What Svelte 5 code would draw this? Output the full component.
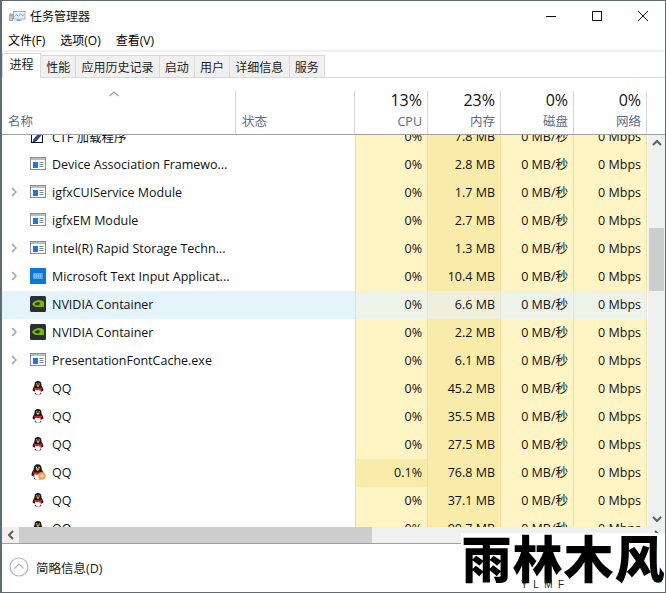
<script>
  const menus = ['文件(F)', '选项(O)', '查看(V)'];
  const tabs = ['进程', '性能', '应用历史记录', '启动', '用户', '详细信息', '服务'];

  const totals = [
    { pct: '13%', label: 'CPU' },
    { pct: '23%', label: '内存' },
    { pct: '0%', label: '磁盘' },
    { pct: '0%', label: '网络' }
  ];

  const rows = [
    { name: 'CTF 加载程序', icon: 'ctf', mem: '7.8 MB' },
    { name: 'Device Association Framewo...', icon: 'win', mem: '2.8 MB' },
    { name: 'igfxCUIService Module', icon: 'win', mem: '1.7 MB', more: true },
    { name: 'igfxEM Module', icon: 'win', mem: '2.7 MB' },
    { name: 'Intel(R) Rapid Storage Techn...', icon: 'win', mem: '1.3 MB', more: true },
    { name: 'Microsoft Text Input Applicat...', icon: 'kbd', mem: '10.4 MB', more: true },
    { name: 'NVIDIA Container', icon: 'nv', mem: '6.6 MB', hover: true },
    { name: 'NVIDIA Container', icon: 'nv', mem: '2.2 MB', more: true },
    { name: 'PresentationFontCache.exe', icon: 'win', mem: '6.1 MB', more: true },
    { name: 'QQ', icon: 'qq', mem: '45.2 MB' },
    { name: 'QQ', icon: 'qq', mem: '35.5 MB' },
    { name: 'QQ', icon: 'qq', mem: '27.5 MB' },
    { name: 'QQ', icon: 'qqbig', cpu: '0.1%', mem: '76.8 MB' },
    { name: 'QQ', icon: 'qq', mem: '37.1 MB' },
    { name: 'QQ', icon: 'qq', mem: '90.7 MB' }
  ];
</script>

{#snippet penguin()}
  <path d="M8 1c-2.300 0-3.500 1.700-3.500 3.900 0 1.100-1 2-1.500 3.400-.6 1.500-.4 3 .3 3 .3 0 .6-.3.8-.7.2.9.6 1.700 1.200 2.200-.7.4-.8 1.200 0 1.400 1 .3 4.400.3 5.400 0 .8-.2.7-1 0-1.400.6-.5 1-1.300 1.200-2.200.2.4.5.7.8.7.7 0 .9-1.500.3-3-.5-1.400-1.500-2.300-1.500-3.400C11.500 2.700 10.300 1 8 1z" fill="#1a1a1a" />
  <path d="M5.200 9.500c-.5 2 0 4.300 1.300 4.800.9.300 2.100.3 3 0 1.300-.5 1.800-2.800 1.300-4.800z" fill="#fff" />
  <path d="M4.200 7.400c2.200 1.100 5.400 1.100 7.600 0l.4 1.500c-.4.300-1 .6-1.600.8l.3 2.300-1.700-2c-1.700.3-3.200.1-4.900-.7z" fill="#e0222a" />
  <path d="M6.500 5c1-.5 2-.5 3 0L8.800 6.500c-.5.300-1.100.3-1.600 0z" fill="#efb320" />
  <path d="M6.300 3.200h1v1.300h-1zM8.700 3.200h1v1.300h-1z" fill="#e8e8e8" />
{/snippet}

<div class="window">
  <header class="titlebar">
    <svg class="app-icon" width="17" height="14" viewBox="0 0 25 16">
      <rect x="1" y="5" width="4" height="10" fill="#c9c9c9" stroke="#8b8b8b" />
      <rect x="2" y="7" width="2" height="1" fill="#4ba34b" />
      <rect x="6.500" y="1.500" width="17" height="11" fill="#e6f1fa" stroke="#7f8c97" />
      <path d="M8 9l3-3 3 2.500 3-4 3 3 2-1" fill="none" stroke="#3d9bd8" />
      <path d="M12 13h5v1.500h2v1h-9v-1h2z" fill="#8d959c" />
    </svg>
    <span class="title">任务管理器</span>
    <div class="controls">
      <svg width="46" height="30" viewBox="0 0 46 30"><path d="M18 15.500h10" stroke="#111" /></svg>
      <svg width="46" height="30" viewBox="0 0 46 30"><rect x="18.500" y="10.500" width="9" height="9" fill="none" stroke="#111" /></svg>
      <svg width="46" height="30" viewBox="0 0 46 30"><path d="M18 10l10 10M28 10l-10 10" stroke="#111" /></svg>
    </div>
  </header>

  <nav class="menubar">
    {#each menus as m}
      <span>{m}</span>
    {/each}
  </nav>

  <div class="tabbar">
    {#each tabs as t, i}
      <span class="tab" class:active={i === 0}>{t}</span>
    {/each}
  </div>

  <div class="table-head">
    <div class="head-cell name-col">
      <svg class="sort" width="12" height="6" viewBox="0 0 12 6"><path d="M1.500 5L6 1l4.500 4" fill="none" stroke="#9a9fa6" stroke-width="1.200" /></svg>
      <span class="head-label">名称</span>
    </div>
    <div class="head-cell status-col"><span class="head-label">状态</span></div>
    {#each totals as t}
      <div class="head-cell num-col">
        <span class="pct">{t.pct}</span>
        <span class="head-label">{t.label}</span>
      </div>
    {/each}
  </div>

  <div class="table-area">
    <div class="rows-view">
      <div class="rows">
        {#each rows as r}
          <div class="row" class:hover={r.hover}>
            <div class="name-col name-cell">
              <span class="chevron">
                {#if r.more}
                  <svg width="7" height="10" viewBox="0 0 7 10"><path d="M1 1l4 4-4 4" fill="none" stroke="#a3a3a3" stroke-width="1.500" /></svg>
                {/if}
              </span>
              <svg class="icon" width="16" height="16" viewBox="0 0 16 16">
                {#if r.icon === 'win'}
                  <rect x="0.500" y="1.500" width="15" height="12" fill="#fff" stroke="#8a8f94" />
                  <rect x="1" y="2" width="14" height="2" fill="#b9bec3" />
                  <rect x="3" y="6" width="5" height="6" fill="#1f78d1" />
                  <path d="M9.500 6.500h4M9.500 8.500h4M9.500 10.500h4" stroke="#7d8b99" />
                {:else if r.icon === 'kbd'}
                  <rect width="16" height="16" fill="#0a78d7" />
                  <rect x="3" y="5" width="10" height="6" rx="1" fill="#5aa5e6" />
                  <path d="M4 7h8M4 9h8" stroke="#b9dcf6" stroke-dasharray="1 1" />
                {:else if r.icon === 'nv'}
                  <rect width="16" height="16" rx="1.500" fill="#2b2f33" />
                  <path d="M2 8c2-3 4.500-4 7-4 2 0 4 .7 5 2v5H6.500c-2 0-3.500-1-4.500-3z" fill="#76b900" />
                  <path d="M4.500 8c1.300-1.700 4-2.300 6-1-1 .2-1.500 1-1 2-2 .7-3.800.2-5-1z" fill="#2b2f33" />
                {:else if r.icon === 'ctf'}
                  <rect x="1.500" y="3.500" width="11" height="11" fill="#fff" stroke="#111" />
                  <path d="M4 11L12 2l2 2-8 9-3 1z" fill="#1d4fb0" stroke="#111" stroke-width="0.600" />
                {:else if r.icon === 'qq'}
                  {@render penguin()}
                {:else}
                  <g transform="translate(-1.500 -1) scale(1.150)">
                    {@render penguin()}
                  </g>
                  <circle cx="12" cy="12" r="3.800" fill="#f7a35c" />
                  <circle cx="12" cy="12" r="1.600" fill="#fcd3ac" />
                {/if}
              </svg>
              <span class="proc">{r.name}</span>
            </div>
            <div class="status-col"></div>
            <div class="num-col cell" class:warm={r.cpu}>{r.cpu ?? '0%'}</div>
            <div class="num-col cell mem">{r.mem}</div>
            <div class="num-col cell">0 MB/秒</div>
            <div class="num-col cell">0 Mbps</div>
          </div>
        {/each}
      </div>
      <div class="vscroll">
        <span class="arrow"><svg width="10" height="6" viewBox="0 0 10 6"><path d="M1 5l4-4 4 4" fill="none" stroke="#606060" stroke-width="2" /></svg></span>
        <div class="vtrack"><div class="vthumb"></div></div>
        <span class="arrow"><svg width="10" height="6" viewBox="0 0 10 6"><path d="M1 1l4 4 4-4" fill="none" stroke="#606060" stroke-width="2" /></svg></span>
      </div>
    </div>
    <div class="hscroll">
      <span class="arrow"><svg width="6" height="10" viewBox="0 0 6 10"><path d="M5 1L1 5l4 4" fill="none" stroke="#606060" stroke-width="2" /></svg></span>
      <div class="hthumb"></div>
      <span class="arrow end"><svg width="6" height="10" viewBox="0 0 6 10"><path d="M1 1l4 4-4 4" fill="none" stroke="#606060" stroke-width="2" /></svg></span>
    </div>
  </div>

  <footer class="footer">
    <svg width="20" height="20" viewBox="0 0 20 20"><circle cx="10" cy="10" r="9" fill="none" stroke="#b4b4b4" stroke-width="1.200" /><path d="M5.500 11.500L10 7l4.500 4.500" fill="none" stroke="#b4b4b4" stroke-width="1.200" /></svg>
    <span>简略信息(D)</span>
  </footer>

  <div class="watermark">
    <span class="wm-cn">雨林木风</span>
    <span class="wm-en">YLMF</span>
  </div>
</div>

<style>
  :global(body) {
    margin: 0;
    background: #fff;
  }

  .window {
    position: relative;
    width: 666px;
    height: 593px;
    box-sizing: border-box;
    border: 1px solid #5f6b73;
    border-width: 1px 1px 1px 2px;
    display: flex;
    flex-direction: column;
    overflow: hidden;
    background: #fff;
    color: #000;
    font-family: "Open Sans", "Noto Sans CJK SC", sans-serif;
    font-size: 12.500px;
  }

  .titlebar {
    height: 29px;
    display: flex;
    align-items: center;
    padding-left: 7px;
    flex: none;
  }

  .app-icon {
    margin-right: 4px;
  }

  .title {
    font-size: 12px;
    color: #111;
  }

  .controls {
    margin-left: auto;
    display: flex;
    margin-right: -1px;
  }

  .menubar {
    height: 20px;
    display: flex;
    align-items: center;
    gap: 15px;
    padding-left: 6px;
    border-bottom: 2px solid #f0f0f0;
    flex: none;
    font-size: 12px;
  }

  .tabbar {
    height: 25px;
    display: flex;
    align-items: flex-end;
    border-bottom: 1px solid #d9d9d9;
    flex: none;
    font-size: 12px;
  }

  .tab {
    height: 22px;
    box-sizing: border-box;
    display: flex;
    align-items: center;
    padding: 0 5.150px;
    background: #f0f0f0;
    border: 1px solid #d9d9d9;
    border-left: none;
    border-bottom: none;
    color: #222;
  }

  .tab.active {
    height: 25px;
    margin-bottom: -1px;
    background: #fff;
    padding: 0 6.500px 3px;
    border-left: 1px solid #d9d9d9;
    border-bottom: 1px solid #fff;
  }

  .table-head {
    height: 57px;
    box-sizing: border-box;
    display: flex;
    flex: none;
    border-bottom: 1px solid #a0a0a0;
    padding-top: 13px;
  }

  .head-cell {
    display: flex;
    flex-direction: column;
    justify-content: flex-end;
    box-sizing: border-box;
    padding-bottom: 3px;
    border-right: 1px solid #d6d6d6;
  }

  .name-col {
    width: 234px;
    flex: none;
    box-sizing: border-box;
  }

  .status-col {
    width: 119px;
    flex: none;
    box-sizing: border-box;
  }

  .num-col {
    width: 73px;
    flex: none;
    box-sizing: border-box;
  }

  .head-cell.name-col,
  .head-cell.status-col {
    padding-left: 6px;
    position: relative;
  }

  .head-cell.num-col {
    text-align: right;
    padding-right: 5px;
  }

  .sort {
    position: absolute;
    top: 0;
    left: 106px;
  }

  .head-label {
    color: #5d6b80;
    font-size: 12.500px;
    line-height: 19px;
  }

  .pct {
    font-size: 16px;
    line-height: 24px;
    color: #111;
  }

  .table-area {
    flex: 1;
    min-height: 0;
    display: flex;
    flex-direction: column;
  }

  .rows-view {
    flex: 1;
    min-height: 0;
    display: flex;
    overflow: hidden;
  }

  .rows {
    margin-top: -12px;
    width: 646px;
    flex: none;
  }

  .row {
    height: 28px;
    display: flex;
    align-items: stretch;
  }

  .name-cell {
    display: flex;
    align-items: center;
    padding-left: 9px;
    padding-bottom: 2px;
  }

  .chevron {
    width: 19px;
    display: flex;
    align-items: center;
    flex: none;
  }

  .icon {
    flex: none;
    margin-right: 6px;
  }

  .proc {
    white-space: nowrap;
    color: #111;
  }

  .cell {
    display: flex;
    align-items: center;
    justify-content: flex-end;
    padding: 0 5px 0 0;
    background: #fff4c4;
    border-right: 1px solid #f1dfa3;
    color: #111;
    white-space: nowrap;
    line-height: 16px;
  }

  .status-col + .cell {
    border-left: 1px solid #f1dfa3;
  }

  .cell.mem,
  .cell.warm {
    background: #f9ecaa;
  }

  .row.hover .name-cell,
  .row.hover .status-col {
    background: #e5f3fb;
  }

  .row.hover .cell {
    background: #eef3ea;
    border-right-color: #e4e6d8;
  }

  .row.hover .cell.mem {
    background: #eef0dc;
  }

  .vscroll {
    width: 17px;
    background: #f0f0f0;
    display: flex;
    flex-direction: column;
    flex: none;
  }

  .vtrack {
    flex: 1;
    padding-top: 77px;
  }

  .vthumb {
    height: 63px;
    margin: 0 1px;
    background: #cdcdcd;
  }

  .arrow {
    flex: none;
    width: 17px;
    height: 16px;
    display: flex;
    align-items: center;
    justify-content: center;
  }

  .arrow.end {
    margin-left: auto;
  }

  .hscroll {
    height: 17px;
    box-sizing: border-box;
    flex: none;
    display: flex;
    align-items: center;
    background: #f0f0f0;
    border-bottom: 1px solid #a0a0a0;
  }

  .hthumb {
    width: 353px;
    height: 16px;
    background: #cdcdcd;
  }

  .footer {
    height: 48px;
    box-sizing: border-box;
    flex: none;
    display: flex;
    align-items: center;
    gap: 7px;
    padding: 0 0 2px 7px;
    color: #222;
  }

  .watermark {
    position: absolute;
    left: 459px;
    top: 532px;
    width: 205px;
    height: 59px;
    background: #fff;
    display: flex;
    justify-content: center;
    align-items: flex-start;
  }

  .wm-cn {
    font-family: "Noto Sans CJK SC", sans-serif;
    font-weight: 900;
    font-size: 50px;
    line-height: 46px;
    color: #000;
    letter-spacing: 1px;
  }

  .wm-en {
    position: absolute;
    left: 60px;
    bottom: 2px;
    line-height: 10px;
    font-family: "Liberation Sans", sans-serif;
    font-size: 10px;
    letter-spacing: 5.500px;
    color: #222;
  }
</style>
